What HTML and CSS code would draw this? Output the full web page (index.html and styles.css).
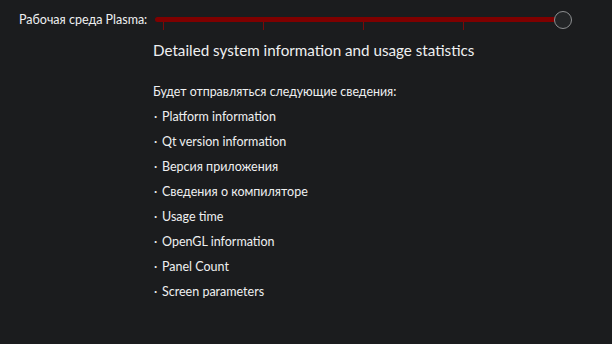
FILE: index.html
```html
<!DOCTYPE html>
<html lang="ru">
<head>
  <meta charset="UTF-8">
  <title>Plasma</title>
  <link rel="stylesheet" href="styles.css">
</head>
<body>
  <div class="page">
    <div class="row">
      <label class="label">Рабочая среда Plasma:</label>
      <div class="slider">
        <div class="track"></div>
        <div class="ticks">
          <span></span><span></span><span></span><span></span>
        </div>
        <div class="handle"></div>
      </div>
    </div>
    <div class="content">
      <h2 class="title">Detailed system information and usage statistics</h2>
      <p class="intro">Будет отправляться следующие сведения:</p>
      <ul class="items">
        <li>Platform information</li>
        <li>Qt version information</li>
        <li>Версия приложения</li>
        <li>Сведения о компиляторе</li>
        <li>Usage time</li>
        <li>OpenGL information</li>
        <li>Panel Count</li>
        <li>Screen parameters</li>
      </ul>
    </div>
  </div>
</body>
</html>
```

FILE: styles.css
```css
body {
  margin: 0;
  background: #1b1c1e;
  color: #eff0f1;
  font-family: 'Lato', 'Noto Sans', sans-serif;
  height: 344px;
  overflow: hidden;
}

.page {
  padding: 10px 0 0 19px;
}

.row {
  display: flex;
  align-items: flex-start;
}

.label {
  font-size: 12.5px;
  line-height: 20px;
  width: 136px;
  white-space: nowrap;
}

.slider {
  position: relative;
  width: 418px;
  height: 22px;
}

.track {
  position: absolute;
  left: 0;
  top: 7px;
  width: 405px;
  height: 5px;
  border-radius: 3px;
  background: #7f0000;
}

.ticks span {
  position: absolute;
  top: 12px;
  width: 1px;
  height: 8px;
  background: #7a0a0a;
}

.ticks span:nth-child(1) { left: 8px; }
.ticks span:nth-child(2) { left: 108px; }
.ticks span:nth-child(3) { left: 208px; }
.ticks span:nth-child(4) { left: 308px; }

.handle {
  position: absolute;
  left: 399px;
  top: 1px;
  width: 16px;
  height: 16px;
  border: 1px solid #8d8f91;
  border-radius: 50%;
  background: #232527;
}

.content {
  padding-left: 134px;
}

.title {
  margin: 7px 0 0;
  font-size: 15.2px;
  font-weight: 400;
  line-height: 22px;
}

.intro {
  margin: 21px 0 0;
  font-size: 12.4px;
  line-height: 20px;
}

.items {
  list-style: none;
  margin: 5px 0 0;
  padding: 0;
}

.items li {
  font-size: 12.5px;
  line-height: 20px;
  margin-bottom: 5px;
}

.items li::before {
  content: "·";
  display: inline-block;
  width: 8px;
  margin-left: 1px;
}
```
